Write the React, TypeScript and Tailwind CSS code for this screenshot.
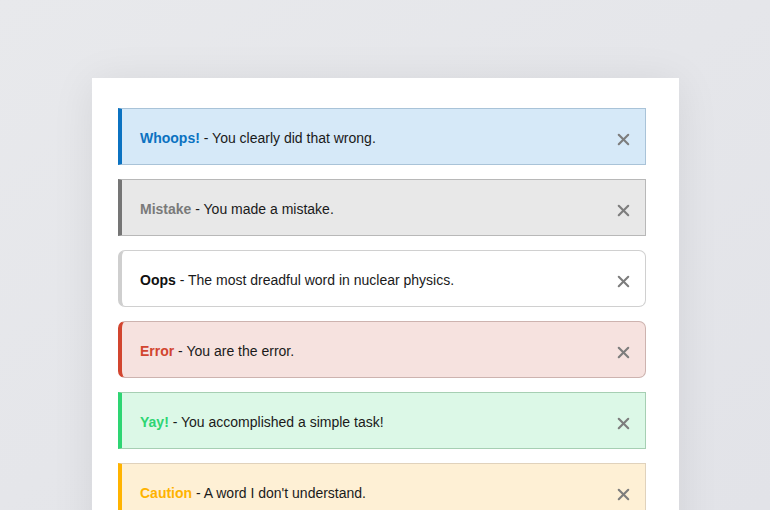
import { X } from 'lucide-react';

type Alert = {
  title: string;
  text: string;
  box: string;
  titleColor: string;
};

const alerts: Alert[] = [
  {
    title: 'Whoops!',
    text: 'You clearly did that wrong.',
    box: 'bg-[#d6e9f8] border-[#a9c3d8] border-l-[#0b72c1]',
    titleColor: 'text-[#0b72c1]',
  },
  {
    title: 'Mistake',
    text: 'You made a mistake.',
    box: 'bg-[#e8e8e8] border-[#b8b8b8] border-l-[#757575]',
    titleColor: 'text-[#7a7a7a]',
  },
  {
    title: 'Oops',
    text: 'The most dreadful word in nuclear physics.',
    box: 'bg-white border-[#d0d0d0] border-l-[#cfcfcf] rounded-[7px]',
    titleColor: 'text-[#111]',
  },
  {
    title: 'Error',
    text: 'You are the error.',
    box: 'bg-[#f6e2df] border-[#cdb3af] border-l-[#d2452f] rounded-[7px]',
    titleColor: 'text-[#d2452f]',
  },
  {
    title: 'Yay!',
    text: 'You accomplished a simple task!',
    box: 'bg-[#dcf8e7] border-[#a6cfb3] border-l-[#2ed573]',
    titleColor: 'text-[#2ed573]',
  },
  {
    title: 'Caution',
    text: "A word I don't understand.",
    box: 'bg-[#fef0d5] border-[#e0d2bc] border-l-[#ffb300]',
    titleColor: 'text-[#ffb300]',
  },
];

export default function App() {
  return (
    <div className="h-[510px] w-[770px] overflow-hidden bg-gradient-to-br from-[#e8e9ec] to-[#e2e3e8] font-['Liberation_Sans',Arial,sans-serif]">
      <div className="ml-[92px] mt-[78px] w-[587px] bg-white pl-[26px] pt-[30px] pb-10 shadow-[0_4px_40px_rgba(0,0,0,0.08)]">
        <div className="flex w-[528px] flex-col gap-[14px]">
          {alerts.map(a => (
            <div
              key={a.title}
              className={`flex h-[57px] items-center justify-between border border-l-4 pl-[18px] pr-[12px] ${a.box}`}
            >
              <div className="mt-[3px] text-[14px] text-[#1a1a1a]">
                <span className={`font-bold ${a.titleColor}`}>{a.title}</span> - {a.text}
              </div>
              <X className="mt-[5px] h-[19px] w-[19px] text-[#7d7d7d]" strokeWidth={2.6} />
            </div>
          ))}
        </div>
      </div>
    </div>
  );
}
